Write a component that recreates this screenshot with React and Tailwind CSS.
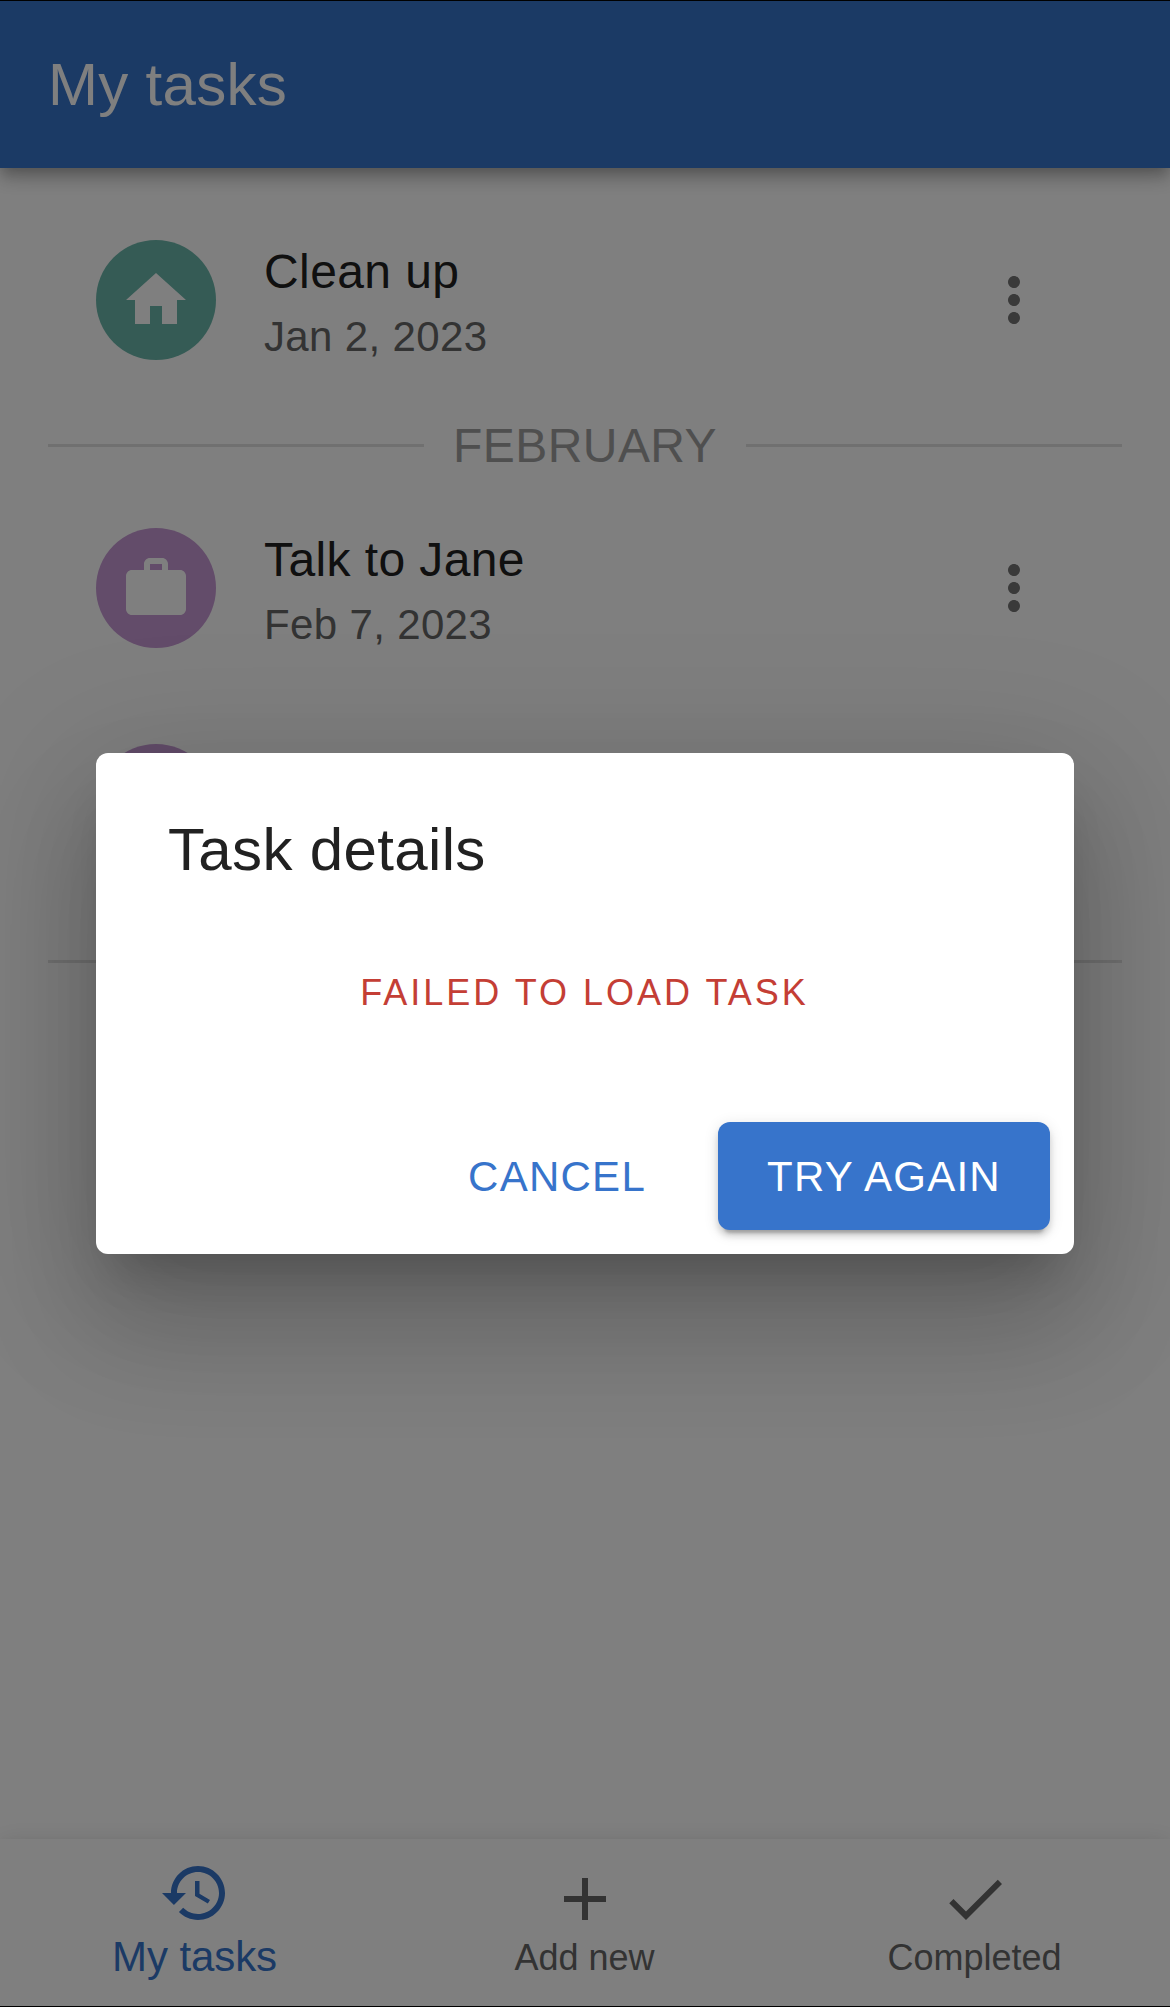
const ICONS = {
  home: 'M10 20v-6h4v6h5v-8h3L12 3 2 12h3v8z',
  work: 'M20 6h-4V4c0-1.11-.89-2-2-2h-4c-1.11 0-2 .89-2 2v2H4c-1.11 0-1.99.89-1.99 2L2 19c0 1.11.89 2 2 2h16c1.11 0 2-.89 2-2V8c0-1.11-.89-2-2-2zm-6 0h-4V4h4v2z',
  more: 'M12 8c1.1 0 2-.9 2-2s-.9-2-2-2-2 .9-2 2 .9 2 2 2zm0 2c-1.1 0-2 .9-2 2s.9 2 2 2 2-.9 2-2-.9-2-2-2zm0 6c-1.1 0-2 .9-2 2s.9 2 2 2 2-.9 2-2-.9-2-2-2z',
  history: 'M13 3c-4.97 0-9 4.03-9 9H1l3.89 3.89.07.14L9 12H6c0-3.87 3.13-7 7-7s7 3.13 7 7-3.13 7-7 7c-1.93 0-3.68-.79-4.94-2.06l-1.42 1.42C8.27 19.99 10.51 21 13 21c4.97 0 9-4.03 9-9s-4.03-9-9-9zm-1 5v5l4.28 2.54.72-1.21-3.5-2.08V8H12z',
  add: 'M19 13h-6v6h-2v-6H5v-2h6V5h2v6h6v2z',
  check: 'M9 16.17 4.83 12l-1.42 1.41L9 19 21 7l-1.41-1.41z',
};

function Icon({ name }) {
  return (
    <svg viewBox="0 0 24 24" className="size-18 shrink-0 fill-current" aria-hidden="true">
      <path d={ICONS[name]} />
    </svg>
  );
}

function Task({ icon, color, title, date }) {
  return (
    <li className="flex h-54 items-center pr-30 pl-24">
      <span className={`flex size-30 shrink-0 items-center justify-center rounded-full text-white ${color}`}>
        <Icon name={icon} />
      </span>
      <div className="ml-12 flex-1 pt-[1px]">
        <p className="pt-[1px] text-[48px] leading-[72px] tracking-[0.4px] text-[#212121]">{title}</p>
        <p className="text-[42px] leading-[58px] tracking-[0.35px] text-[#666]">{date}</p>
      </div>
      <button className="text-[#757575]" aria-label="Task options">
        <Icon name="more" />
      </button>
    </li>
  );
}

function NavItem({ icon, label, active }) {
  return (
    <button
      className={
        active
          ? 'flex flex-1 flex-col items-center pt-[18px] text-[42px] leading-[55px] tracking-[-0.1px] text-[#3774cb]'
          : 'flex flex-1 flex-col items-center pt-[24px] text-[36px] leading-[46px] text-[#666]'
      }
    >
      <Icon name={icon} />
      <span className="pr-[1px]">{label}</span>
    </button>
  );
}

export default function App() {
  return (
    <div className="relative h-[2007px] w-[1170px] overflow-hidden border-y border-black bg-white font-['Liberation_Sans',Arial,sans-serif]">
      <div className="flex h-full flex-col">
        <header className="z-10 flex h-[167px] shrink-0 items-center bg-[#3774cb] px-12 shadow-[0_6px_12px_-3px_rgba(0,0,0,0.2),0_12px_15px_0_rgba(0,0,0,0.14),0_3px_30px_0_rgba(0,0,0,0.12)]">
          <h1 className="text-[60px] leading-24 tracking-[0.3px] text-white">My tasks</h1>
        </header>
        <main className="flex-1 pt-6">
          <ul>
            <Task icon="home" color="bg-[#6bb6aa]" title="Clean up" date="Jan 2, 2023" />
            <li className="flex h-18 items-center px-12 pt-[3px] text-[48px] leading-[72px] tracking-[0.45px] text-[#9e9e9e]">
              <span className="h-[3px] flex-1 bg-[#e0e0e0]" />
              <span className="px-[28.8px]">FEBRUARY</span>
              <span className="h-[3px] flex-1 bg-[#e0e0e0]" />
            </li>
            <Task icon="work" color="bg-[#c698d4]" title="Talk to Jane" date="Feb 7, 2023" />
            <Task icon="work" color="bg-[#c698d4]" title="" date="" />
          </ul>
          <div className="mx-12 mt-12 h-[3px] bg-[#e0e0e0]" />
        </main>
        <nav className="z-10 flex h-[167px] shrink-0 bg-white shadow-[0_9px_9px_-6px_rgba(0,0,0,0.2),0_9px_12px_0_rgba(0,0,0,0.14),0_3px_24px_0_rgba(0,0,0,0.12)]">
          <NavItem icon="history" label="My tasks" active />
          <NavItem icon="add" label="Add new" />
          <NavItem icon="check" label="Completed" />
        </nav>
      </div>

      <div className="absolute inset-0 z-20 flex items-center justify-center bg-black/50">
        <section
          role="dialog"
          className="flex h-[501px] w-[978px] flex-col rounded-xl bg-white shadow-[0_33px_45px_-21px_rgba(0,0,0,0.2),0_72px_114px_9px_rgba(0,0,0,0.14),0_27px_138px_24px_rgba(0,0,0,0.12)]"
        >
          <h2 className="px-18 pt-[49px] text-[60px] leading-24 tracking-[0.35px] text-[#212121]">Task details</h2>
          <p className="mt-[47px] pr-[1px] text-center text-[36px] leading-24 tracking-[3px] text-[#c43e35]">FAILED TO LOAD TASK</p>
          <div className="mt-auto flex items-center justify-end gap-[48px] p-6 text-[42px] leading-[106px] tracking-[1.25px]">
            <button className="px-6 pt-[2px] text-[#3774cb]">CANCEL</button>
            <button className="w-[332px] rounded-xl bg-[#3774cb] pt-[2px] text-white shadow-[0_9px_3px_-6px_rgba(0,0,0,0.2),0_6px_6px_0_rgba(0,0,0,0.14),0_3px_15px_0_rgba(0,0,0,0.12)]">
              TRY AGAIN
            </button>
          </div>
        </section>
      </div>
    </div>
  );
}
